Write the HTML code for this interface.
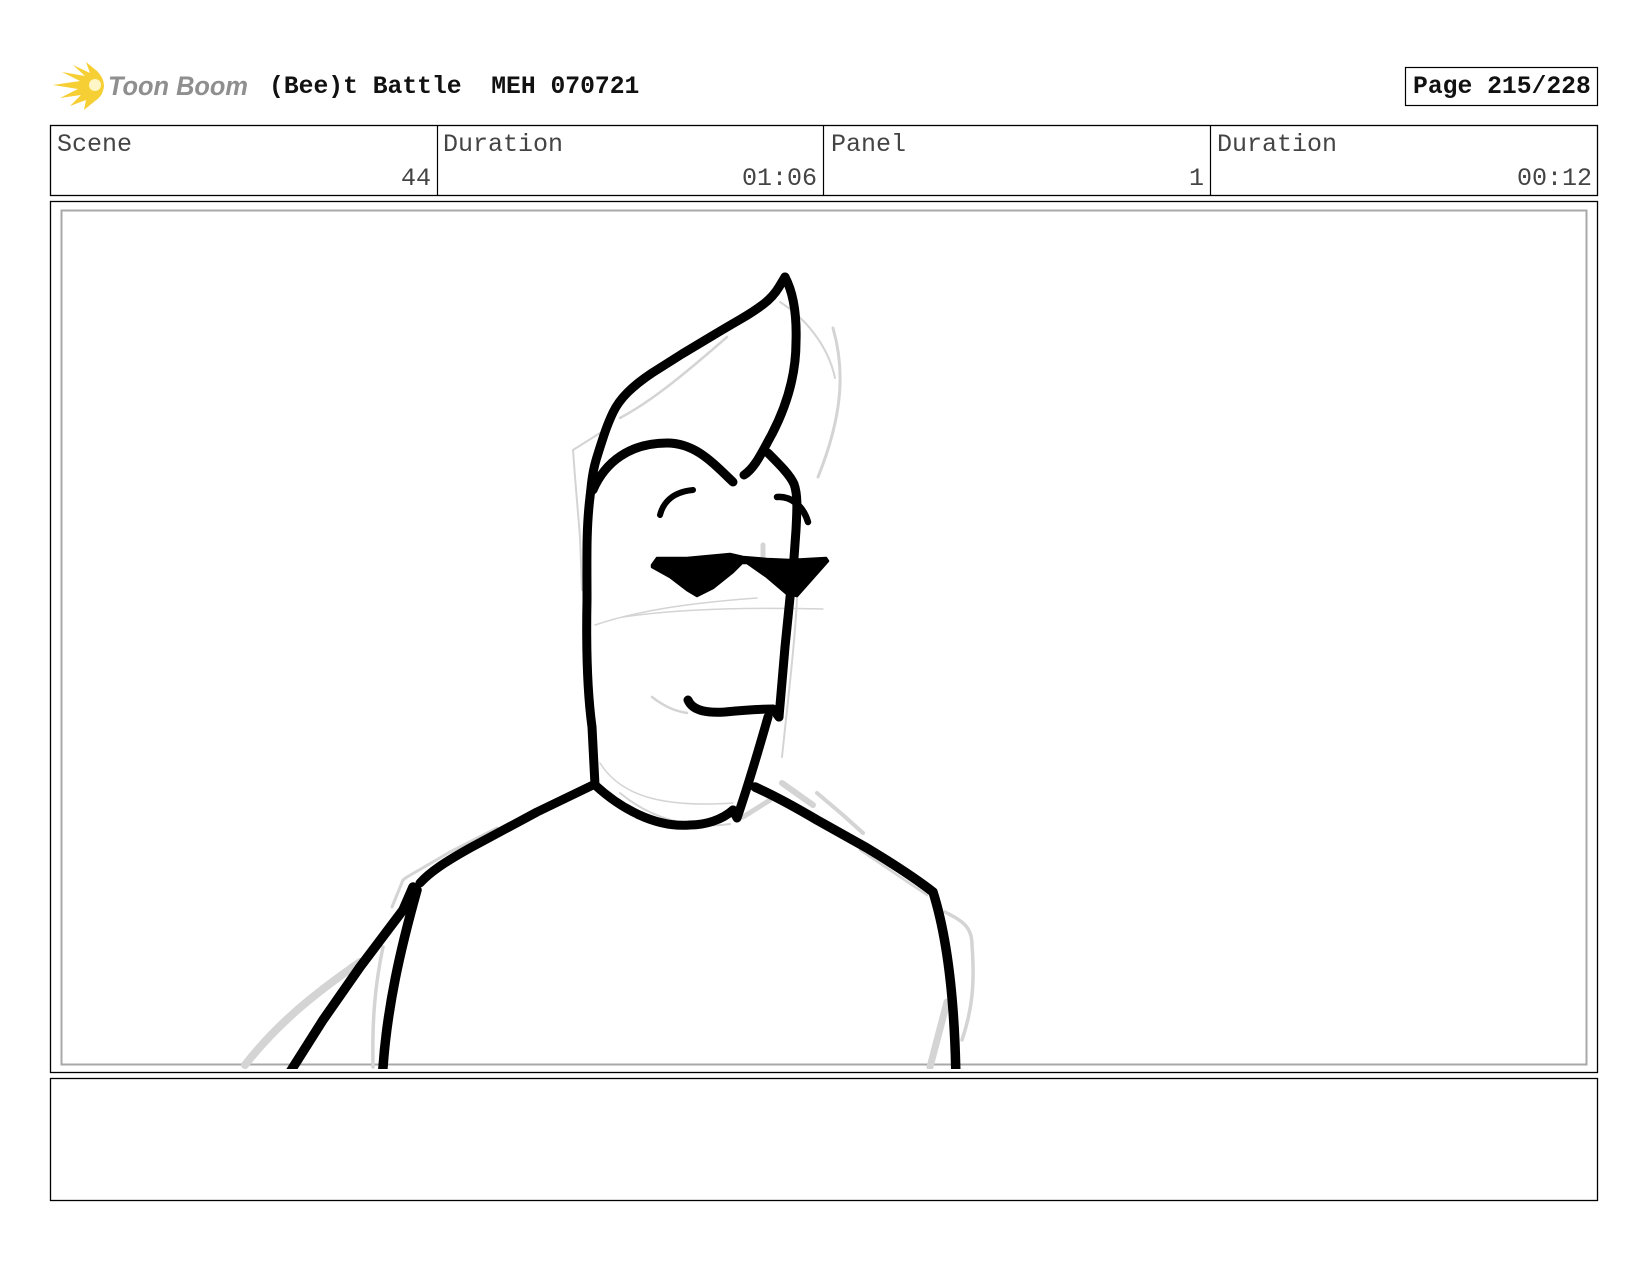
<!DOCTYPE html>
<html lang="en">
<head>
<meta charset="utf-8">
<title>(Bee)t Battle MEH 070721 - Page 215/228</title>
<style>
html,body{margin:0;padding:0;background:#fff;width:1648px;height:1276px;overflow:hidden}
svg{display:block;position:absolute;left:0;top:0}
text{font-family:"Liberation Mono",monospace;font-size:25px;fill:#444}
.b{font-weight:700;fill:#111;font-size:24.7px}
.r{text-anchor:end}
.logo{font-family:"Liberation Sans",sans-serif;font-weight:700;font-style:italic;font-size:27px;fill:#8f8f8f}
.ink{fill:none;stroke:#000;stroke-width:9;stroke-linecap:round;stroke-linejoin:round}
.g{fill:none;stroke:#d4d4d4;stroke-linecap:round;stroke-linejoin:round}
</style>
</head>
<body>
<svg width="1648" height="1276" viewBox="0 0 1648 1276" xmlns="http://www.w3.org/2000/svg">
<rect width="1648" height="1276" fill="#fff"/>

<!-- logo -->
<g>
<path d="M53 85 L80 81 L62 72 L85 76 L73 65 L90 73 L86 62 L97 71 Q104 78 104 86 Q103 96 95 101 L84 110 L86 100 L70 106 L81 95 L60 98 L78 89 Z" fill="#f6cf35"/>
<circle cx="95" cy="85" r="6" fill="#fff6c8"/>
<text class="logo" x="108" y="95" textLength="140" lengthAdjust="spacingAndGlyphs">Toon Boom</text>
</g>

<!-- title -->
<text class="b" x="269" y="93" xml:space="preserve">(Bee)t Battle&#160;&#160;MEH 070721</text>
<rect x="1405.5" y="67.5" width="192" height="38" fill="none" stroke="#000" stroke-width="1.2"/>
<text class="b" x="1413" y="93">Page 215/228</text>

<!-- info table -->
<rect x="50.5" y="125.5" width="1547" height="70" fill="none" stroke="#000" stroke-width="1.3"/>
<path d="M437.5 125V195M823.5 125V195M1210.5 125V195" stroke="#000" stroke-width="1.2" fill="none"/>
<text x="57" y="151">Scene</text>
<text x="443" y="151">Duration</text>
<text x="831" y="151">Panel</text>
<text x="1217" y="151">Duration</text>
<text class="r" x="431" y="185">44</text>
<text class="r" x="817" y="185">01:06</text>
<text class="r" x="1204" y="185">1</text>
<text class="r" x="1592" y="185">00:12</text>

<!-- panel frame -->
<rect x="50.5" y="201.5" width="1547" height="871" fill="none" stroke="#000" stroke-width="1.3"/>
<rect x="61.5" y="210.5" width="1525" height="854" fill="none" stroke="#a8a8a8" stroke-width="2"/>

<clipPath id="c"><rect x="50" y="200" width="1548" height="869"/></clipPath>
<g clip-path="url(#c)">
<!-- grey construction lines -->
<g class="g">
<path stroke-width="2.5" d="M620 418 C650 402 680 378 727 337"/>
<path stroke-width="2" d="M780 302 C805 318 828 345 835 378"/>
<path stroke-width="3" d="M833 328 C845 370 843 415 818 477"/>
<path stroke-width="2" d="M600 433 L573 450 L575 477 L580 537 L582 590"/>
<path stroke-width="1.5" d="M595 625 C640 610 690 603 757 598"/>
<path stroke-width="1.5" d="M623 617 C670 610 740 607 823 609"/>
<path stroke-width="2.5" d="M652 697 C665 707 675 711 687 713"/>
<path stroke-width="2" d="M798 560 C798 620 790 680 782 757"/>
<path stroke-width="1.5" d="M600 763 C620 795 660 808 733 803"/>
<path stroke-width="2" d="M620 793 C650 818 690 830 730 824"/>
<path stroke-width="5" d="M743 817 L770 800"/>
<path stroke-width="5" d="M763 545 V557"/>
<path stroke-width="6" d="M782 783 L813 805"/>
<path stroke-width="4" d="M817 793 L843 815 L863 833"/>
<path stroke-width="2.5" d="M860 850 L927 895"/>
<path stroke-width="3.5" d="M945 912 C960 920 972 925 972 945 C975 985 972 1010 962 1040"/>
<path stroke-width="7" d="M947 1002 L930 1067"/>
<path stroke-width="8" d="M245 1065 C280 1020 320 990 360 962"/>
<path stroke-width="3" d="M392 907 L403 880 L407 877 L450 852 L497 828"/>
<path stroke-width="3.5" d="M383 947 C375 985 372 1020 373 1067"/>
</g>

<!-- hair -->
<path class="ink" d="M785 277 L779 287 Q773 297 763 304.5 Q753 312 740 319.5 Q727 327 712 336 L682 354 L652 373 Q637 383 627.5 392.5 Q618 402 613 412.5 Q608 423 604 435 Q600 447 596.5 458.5 Q593 470 591.5 483.5 L590 497"/>
<path class="ink" d="M785 277 C793 292 797 312 796 342 C796 375 787 405 772 434 C762 452 755 468 744 475"/>
<!-- forehead -->
<path class="ink" d="M593 490 C605 462 630 443 667 443 C695 443 712 462 733 482"/>
<path class="ink" d="M768 453 C780 465 790 475 794 484 C798 495 797 510 796 530 L794 558 L785 647 L779 717"/>
<!-- brows -->
<path class="ink" style="stroke-width:6" d="M660 515 C663 503 672 492 693 490"/>
<path class="ink" style="stroke-width:6.5" d="M777 497 C790 496 803 505 808 522"/>
<!-- face -->
<path class="ink" d="M590 497 C586 530 587 560 587 600 C586 650 587 690 592 727 L595 785"/>
<path class="ink" d="M595 785 C620 808 655 828 690 825 C705 825 722 820 733 810"/>
<path class="ink" d="M768 717 C760 745 750 780 737 818 L733 810"/>
<path class="ink" d="M688 700 C693 712 710 713 725 712 C745 710 760 709 773 709 L779 717"/>
<!-- sunglasses -->
<path d="M652 565 L657 558 L687 558 L730 554 L743 557 L767 559 L790 560 L826 558 L828 561 L797 596 L787 594 L767 577 L747 563 L742 563 L733 572 L713 588 L697 596 L687 590 L670 577 L652 567 Z" fill="#000" stroke="#000" stroke-width="2.5" stroke-linejoin="round"/>
<!-- shoulders -->
<path class="ink" d="M593 785 L537 812 L470 848 C445 862 430 872 420 883"/>
<path class="ink" style="stroke-width:9.5" d="M413 887 L403 910 L360 967 L323 1020 L285 1080"/>
<path class="ink" style="stroke-width:9.5" d="M417 890 C403 940 385 1010 382 1085"/>
<path class="ink" style="stroke-width:9.5" d="M755 787 C775 796 795 807 817 820 L867 848 C890 862 915 878 933 892 C945 930 955 990 956 1085"/>
</g>

<!-- notes -->
<rect x="50.5" y="1078.5" width="1547" height="122" fill="none" stroke="#000" stroke-width="1.3"/>
</svg>
</body>
</html>
